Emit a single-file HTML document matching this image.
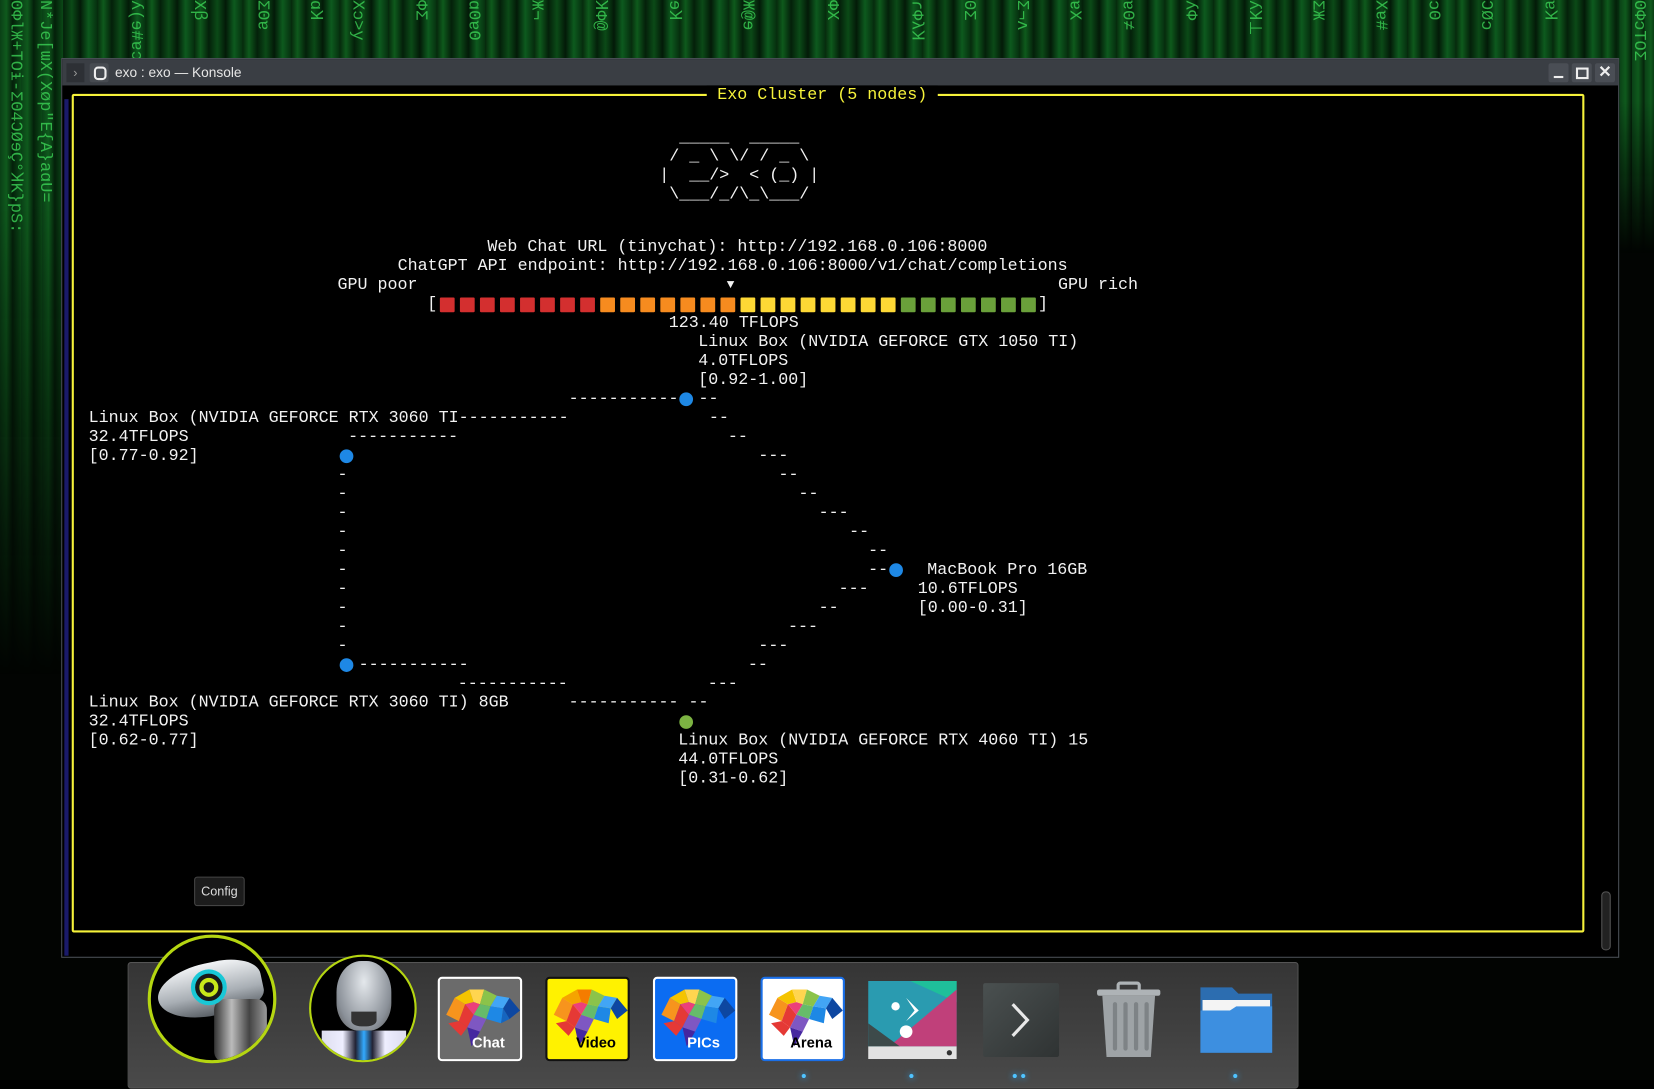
<!DOCTYPE html>
<html><head><meta charset="utf-8"><style>
html,body{margin:0;padding:0;background:#000;width:1654px;height:1080px;overflow:hidden}
#s{position:absolute;left:0;top:0;width:1568px;height:1024px;transform:scale(1.05485);transform-origin:0 0;background:#020402;font-family:"Liberation Sans",sans-serif}
.mx{position:absolute;font-family:"Liberation Mono",monospace;color:#3fdc5a;writing-mode:vertical-rl;font-size:16px;line-height:18px;white-space:nowrap;opacity:.75}
.t{position:absolute;font-family:"Liberation Mono","DejaVu Sans Mono",monospace;font-size:15.8px;line-height:18px;color:#f2f2f2;white-space:pre}
.d{position:absolute;width:13px;height:13px;border-radius:50%;background:#1e88e5}
.sq{position:absolute;top:282px;width:14px;height:14px;border-radius:1px}
.ic{position:absolute;top:926px;width:80px;height:80px;border-radius:4px;box-sizing:border-box;overflow:hidden}
.ic svg{position:absolute;left:2px;top:4px}
.lab{position:absolute;bottom:8px;width:100%;text-align:center;font-weight:bold;font-size:14px;left:8px}
</style></head><body><div id="s">
<!-- matrix bg -->
<div style="position:absolute;left:0;top:0;width:1568px;height:60px;background:repeating-linear-gradient(90deg,#06280c 0,#0e5a1c 6px,#04200a 14px,#0b4a17 22px,#031a08 30px,#0d5a1e 38px,#06300f 46px)"></div>
<div style="position:absolute;left:0;top:0;width:60px;height:640px;background:repeating-linear-gradient(90deg,#0a4016 0,#0f5a1d 6px,#04200a 12px,#0b4a17 20px);-webkit-mask:linear-gradient(180deg,#000 30%,transparent);mask:linear-gradient(180deg,#000 30%,transparent)"></div>
<div style="position:absolute;left:1535px;top:0;width:33px;height:240px;background:repeating-linear-gradient(90deg,#0a4016 0,#0f5a1d 6px,#04200a 12px);-webkit-mask:linear-gradient(180deg,#000 40%,transparent);mask:linear-gradient(180deg,#000 40%,transparent)"></div>
<div class="mx" style="left:6px;top:0;height:560px">ʘΦlЖ+TOɨ-ΣΘ4ƆØɘÇ°ꞰK}pS:</div>
<div class="mx" style="left:34px;top:0;height:600px">N*Je[ɯX(Xøp"E{A}aɑU=</div>
<div class="mx" style="left:120px;top:0">ʎ(ɘ#ɐɔ</div>
<div class="mx" style="left:180px;top:0">Xꞵ</div>
<div class="mx" style="left:240px;top:0">ΣΘɐ</div>
<div class="mx" style="left:290px;top:0">ɑꞰ</div>
<div class="mx" style="left:330px;top:0">Xɔ>y</div>
<div class="mx" style="left:390px;top:0">ΦΣ</div>
<div class="mx" style="left:440px;top:0">ɑ0ɐΘ</div>
<div class="mx" style="left:500px;top:0">Ж¬</div>
<div class="mx" style="left:560px;top:0">ꞰΦ@</div>
<div class="mx" style="left:630px;top:0">ɘꞰ</div>
<div class="mx" style="left:700px;top:0">Ж@ɘ</div>
<div class="mx" style="left:780px;top:0">ΦX</div>
<div class="mx" style="left:860px;top:0">ɾΦλꞰ</div>
<div class="mx" style="left:910px;top:0">ΘΣ</div>
<div class="mx" style="left:960px;top:0">Σ¬ʌ</div>
<div class="mx" style="left:1010px;top:0">ɐX</div>
<div class="mx" style="left:1060px;top:0">ɐΘ≠</div>
<div class="mx" style="left:1120px;top:0">ʎΦ</div>
<div class="mx" style="left:1180px;top:0">ʎꞰ⊥</div>
<div class="mx" style="left:1240px;top:0">ΣЖ</div>
<div class="mx" style="left:1300px;top:0">Xɐ#</div>
<div class="mx" style="left:1350px;top:0">ɔΘ</div>
<div class="mx" style="left:1400px;top:0">ƆØɔ</div>
<div class="mx" style="left:1460px;top:0">ɐꞰ</div>
<div class="mx" style="left:1545px;top:0;height:200px">ʘΦɔTOΣ</div>
<!-- window -->
<div style="position:absolute;left:58px;top:55px;width:1477px;height:853px;background:#000;border:1px solid #4a4f56;box-sizing:border-box"></div>
<div style="position:absolute;left:59px;top:56px;width:1475px;height:25px;background:#3a3e44"></div>
<div style="position:absolute;left:63px;top:60px;width:17px;height:18px;background:#2d3035;color:#999;font-size:12px;text-align:center;line-height:18px">›</div>
<div style="position:absolute;left:85px;top:60px;width:18px;height:18px;background:#474b51;border-radius:2px"></div>
<div style="position:absolute;left:89px;top:63px;width:8px;height:9px;border:2px solid #eee;border-radius:4px"></div>
<div style="position:absolute;left:109px;top:61px;color:#e6e6e6;font-size:13px">exo : exo — Konsole</div>
<div style="position:absolute;left:1468px;top:60px;width:19px;height:18px;background:#4a4e55;border-radius:2px"><div style="position:absolute;left:5px;top:12px;width:9px;height:2px;background:#eee"></div></div>
<div style="position:absolute;left:1490px;top:60px;width:19px;height:18px;background:#4a4e55;border-radius:2px"><div style="position:absolute;left:4px;top:4px;width:8px;height:7px;border:2px solid #eee"></div></div>
<div style="position:absolute;left:1512px;top:60px;width:19px;height:18px;background:#4a4e55;border-radius:2px;color:#eee;font-size:15px;font-weight:bold;text-align:center;line-height:18px">✕</div>
<div style="position:absolute;left:61px;top:94px;width:4px;height:812px;background:#1a1a6a"></div>
<div style="position:absolute;left:1518px;top:845px;width:7px;height:54px;border:1px solid #555;border-radius:4px;background:#222"></div>
<!-- frame -->
<div style="position:absolute;left:68px;top:89px;width:1434px;height:795px;border:2px solid #f6f23a;box-sizing:border-box;border-radius:2px"></div>
<div class="t" style="left:670px;top:81px;background:#000;color:#f6f23a;padding:0 10px">Exo Cluster (5 nodes)</div>
<div class="t" style="left:625px;top:121px">  _____  _____
 / _ \ \/ / _ \
|  __/>  < (_) |
 \___/_/\_\___/</div>
<div class="t" style="left:462px;top:225px">Web Chat URL (tinychat): http://192.168.0.106:8000</div>
<div class="t" style="left:377px;top:243px">ChatGPT API endpoint: http://192.168.0.106:8000/v1/chat/completions</div>
<div class="t" style="left:320px;top:261px">GPU poor</div>
<div class="t" style="left:689px;top:261px;font-size:12px">▼</div>
<div class="t" style="left:1003px;top:261px">GPU rich</div>
<div class="t" style="left:405px;top:279px">[</div>
<div class="t" style="left:984px;top:279px">]</div>
<div class="t" style="left:634px;top:297px">123.40 TFLOPS</div>
<div class="t" style="left:662px;top:315px">Linux Box (NVIDIA GEFORCE GTX 1050 TI)
4.0TFLOPS
[0.92-1.00]</div>
<div class="t" style="left:539px;top:369px">-----------  --</div>
<div class="d" style="left:644px;top:372px"></div>
<div class="t" style="left:84px;top:387px">Linux Box (NVIDIA GEFORCE RTX 3060 TI-----------
32.4TFLOPS
[0.77-0.92]</div>
<div class="t" style="left:672px;top:387px">--</div>
<div class="t" style="left:330px;top:405px">-----------</div>
<div class="t" style="left:690px;top:405px">--</div>
<div class="d" style="left:322px;top:426px"></div>
<div class="t" style="left:719px;top:423px">---</div>
<div class="t" style="left:320px;top:441px">-
-
-
-
-
-
-
-
-
-</div>
<div class="t" style="left:738px;top:441px">--</div>
<div class="t" style="left:757px;top:459px">--</div>
<div class="t" style="left:776px;top:477px">---</div>
<div class="t" style="left:805px;top:495px">--</div>
<div class="t" style="left:823px;top:513px">--</div>
<div class="t" style="left:823px;top:531px">--</div>
<div class="d" style="left:843px;top:534px"></div>
<div class="t" style="left:879px;top:531px">MacBook Pro 16GB</div>
<div class="t" style="left:795px;top:549px">---</div>
<div class="t" style="left:870px;top:549px">10.6TFLOPS
[0.00-0.31]</div>
<div class="t" style="left:776px;top:567px">--</div>
<div class="t" style="left:747px;top:585px">---</div>
<div class="t" style="left:719px;top:603px">---</div>
<div class="d" style="left:322px;top:624px"></div>
<div class="t" style="left:340px;top:621px">-----------</div>
<div class="t" style="left:709px;top:621px">--</div>
<div class="t" style="left:434px;top:639px">-----------</div>
<div class="t" style="left:671px;top:639px">---</div>
<div class="t" style="left:84px;top:657px">Linux Box (NVIDIA GEFORCE RTX 3060 TI) 8GB
32.4TFLOPS
[0.62-0.77]</div>
<div class="t" style="left:539px;top:657px">----------- --</div>
<div class="d" style="left:644px;top:678px;background:#7cb342"></div>
<div class="t" style="left:643px;top:693px">Linux Box (NVIDIA GEFORCE RTX 4060 TI) 15
44.0TFLOPS
[0.31-0.62]</div>
<div style="position:absolute;left:184px;top:831px;width:48px;height:28px;background:#1c1c1c;border:1px solid #444;border-radius:3px;box-sizing:border-box;color:#ddd;font-size:12px;text-align:center;line-height:26px">Config</div>
<!-- bar squares -->
<div class="sq" style="left:417px;background:#d32f2f"></div><div class="sq" style="left:436px;background:#d32f2f"></div><div class="sq" style="left:455px;background:#d32f2f"></div><div class="sq" style="left:474px;background:#d32f2f"></div><div class="sq" style="left:493px;background:#d32f2f"></div><div class="sq" style="left:512px;background:#d32f2f"></div><div class="sq" style="left:531px;background:#d32f2f"></div><div class="sq" style="left:550px;background:#d32f2f"></div>
<div class="sq" style="left:569px;background:#f68b1f"></div><div class="sq" style="left:588px;background:#f68b1f"></div><div class="sq" style="left:607px;background:#f68b1f"></div><div class="sq" style="left:626px;background:#f68b1f"></div><div class="sq" style="left:645px;background:#f68b1f"></div><div class="sq" style="left:664px;background:#f68b1f"></div><div class="sq" style="left:683px;background:#f68b1f"></div>
<div class="sq" style="left:702px;background:#fdd835"></div><div class="sq" style="left:721px;background:#fdd835"></div><div class="sq" style="left:740px;background:#fdd835"></div><div class="sq" style="left:759px;background:#fdd835"></div><div class="sq" style="left:778px;background:#fdd835"></div><div class="sq" style="left:797px;background:#fdd835"></div><div class="sq" style="left:816px;background:#fdd835"></div><div class="sq" style="left:835px;background:#fdd835"></div>
<div class="sq" style="left:854px;background:#6aa03a"></div><div class="sq" style="left:873px;background:#6aa03a"></div><div class="sq" style="left:892px;background:#6aa03a"></div><div class="sq" style="left:911px;background:#6aa03a"></div><div class="sq" style="left:930px;background:#6aa03a"></div><div class="sq" style="left:949px;background:#6aa03a"></div><div class="sq" style="left:968px;background:#6aa03a"></div>
<!-- dock -->
<div style="position:absolute;left:121px;top:912px;width:1110px;height:120px;background:linear-gradient(180deg,#353535,#4a4a4a);border:1px solid #555;border-radius:3px;box-sizing:border-box"></div>
<div style="position:absolute;left:140px;top:886px;width:122px;height:122px;border-radius:50%;border:3px solid #b5d611;box-sizing:border-box;background:#000;overflow:hidden">
<div style="position:absolute;left:6px;top:24px;width:100px;height:50px;border-radius:50% 40% 30% 50%;background:linear-gradient(180deg,#f2f4f6,#a8aeb4 60%,#5a6066);transform:rotate(-12deg)"></div>
<div style="position:absolute;left:60px;top:58px;width:50px;height:60px;background:linear-gradient(90deg,#333,#bbb,#444,#999);border-radius:10px"></div>
<div style="position:absolute;left:38px;top:30px;width:34px;height:34px;border-radius:50%;border:4px solid #19c8d6;box-sizing:border-box;background:#1a1a1a"></div>
<div style="position:absolute;left:46px;top:38px;width:18px;height:18px;border-radius:50%;border:4px solid #c8e81a;box-sizing:border-box"></div></div>
<div style="position:absolute;left:293px;top:905px;width:102px;height:102px;border-radius:50%;border:2px solid #b5d611;box-sizing:border-box;background:#000;overflow:hidden">
<div style="position:absolute;left:24px;top:4px;width:52px;height:66px;border-radius:45% 45% 40% 40%;background:radial-gradient(ellipse at 50% 30%,#e4e8ec,#8a9098 70%,#555)"></div>
<div style="position:absolute;left:38px;top:52px;width:24px;height:14px;border-radius:0 0 40% 40%;background:#333"></div>
<div style="position:absolute;left:10px;top:70px;width:80px;height:40px;background:linear-gradient(90deg,#dde 0,#eef 25%,#223 40%,#3af 50%,#223 60%,#eef 75%,#dde)"></div></div>

<div class="ic" style="left:415px;background:#6b6b6b;border:2px solid #fff"><svg width="74" height="60" viewBox="0 0 74 60"><polygon points="4,30 12,14 22,20 16,36" fill="#f7941d"/><polygon points="12,14 26,6 30,18 22,20" fill="#f5c400"/><polygon points="26,6 40,6 36,20 30,18" fill="#ffd54f"/><polygon points="40,6 52,12 46,22 36,20" fill="#8bc34a"/><polygon points="52,12 64,14 58,24 46,22" fill="#42a5f5"/><polygon points="64,14 74,26 64,34 58,24" fill="#0d47a1"/><polygon points="16,36 22,20 30,30 24,42" fill="#e53935"/><polygon points="22,20 30,18 36,20 30,30" fill="#ec407a"/><polygon points="36,20 46,22 42,34 30,30" fill="#66bb6a"/><polygon points="46,22 58,24 56,38 42,34" fill="#1e88e5"/><polygon points="58,24 64,34 56,38" fill="#1565c0"/><polygon points="24,42 30,30 42,34 36,46" fill="#7e57c2"/><polygon points="6,38 16,36 24,42 18,50" fill="#e53935"/><polygon points="24,42 36,46 28,60" fill="#4527a0"/></svg><div class="lab" style="color:#fff">Chat</div></div>
<div class="ic" style="left:517px;background:#fff200;border:2px solid #111"><svg width="74" height="60" viewBox="0 0 74 60"><polygon points="4,30 12,14 22,20 16,36" fill="#f7941d"/><polygon points="12,14 26,6 30,18 22,20" fill="#f5a400"/><polygon points="26,6 40,6 36,20 30,18" fill="#f57c00"/><polygon points="40,6 52,12 46,22 36,20" fill="#8bc34a"/><polygon points="52,12 64,14 58,24 46,22" fill="#42a5f5"/><polygon points="64,14 74,26 64,34 58,24" fill="#0d47a1"/><polygon points="16,36 22,20 30,30 24,42" fill="#e53935"/><polygon points="22,20 30,18 36,20 30,30" fill="#ec407a"/><polygon points="36,20 46,22 42,34 30,30" fill="#66bb6a"/><polygon points="46,22 58,24 56,38 42,34" fill="#1e88e5"/><polygon points="24,42 30,30 42,34 36,46" fill="#7e57c2"/><polygon points="6,38 16,36 24,42 18,50" fill="#e53935"/><polygon points="24,42 36,46 28,60" fill="#4527a0"/></svg><div class="lab" style="color:#000">Video</div></div>
<div class="ic" style="left:619px;background:#0b6cf2;border:2px solid #fff"><svg width="74" height="60" viewBox="0 0 74 60"><polygon points="4,30 12,14 22,20 16,36" fill="#f7941d"/><polygon points="12,14 26,6 30,18 22,20" fill="#f5c400"/><polygon points="26,6 40,6 36,20 30,18" fill="#ffd54f"/><polygon points="40,6 52,12 46,22 36,20" fill="#8bc34a"/><polygon points="52,12 64,14 58,24 46,22" fill="#42a5f5"/><polygon points="64,14 74,26 64,34 58,24" fill="#0d47a1"/><polygon points="16,36 22,20 30,30 24,42" fill="#e53935"/><polygon points="22,20 30,18 36,20 30,30" fill="#ec407a"/><polygon points="36,20 46,22 42,34 30,30" fill="#66bb6a"/><polygon points="46,22 58,24 56,38 42,34" fill="#1e88e5"/><polygon points="24,42 30,30 42,34 36,46" fill="#7e57c2"/><polygon points="6,38 16,36 24,42 18,50" fill="#e53935"/><polygon points="24,42 36,46 28,60" fill="#4527a0"/></svg><div class="lab" style="color:#fff">PICs</div></div>
<div class="ic" style="left:721px;background:#fff;border:2px solid #1a6fe8"><svg width="74" height="60" viewBox="0 0 74 60"><polygon points="4,30 12,14 22,20 16,36" fill="#f7941d"/><polygon points="12,14 26,6 30,18 22,20" fill="#f5c400"/><polygon points="26,6 40,6 36,20 30,18" fill="#ffd54f"/><polygon points="40,6 52,12 46,22 36,20" fill="#8bc34a"/><polygon points="52,12 64,14 58,24 46,22" fill="#42a5f5"/><polygon points="64,14 74,26 64,34 58,24" fill="#0d47a1"/><polygon points="16,36 22,20 30,30 24,42" fill="#e53935"/><polygon points="22,20 30,18 36,20 30,30" fill="#ec407a"/><polygon points="36,20 46,22 42,34 30,30" fill="#66bb6a"/><polygon points="46,22 58,24 56,38 42,34" fill="#1e88e5"/><polygon points="24,42 30,30 42,34 36,46" fill="#7e57c2"/><polygon points="6,38 16,36 24,42 18,50" fill="#e53935"/><polygon points="24,42 36,46 28,60" fill="#4527a0"/></svg><div class="lab" style="color:#000">Arena</div></div>
<svg style="position:absolute;left:823px;top:930px" width="84" height="74" viewBox="0 0 84 74"><polygon points="0,0 84,0 84,62 0,62" fill="#2a9bb0"/><polygon points="40,0 84,0 84,20" fill="#1fbf9a"/><polygon points="84,8 84,62 20,62" fill="#c0407a"/><polygon points="0,40 30,62 0,62" fill="#3d4a4a"/><rect x="0" y="62" width="84" height="12" fill="#e2e2e2"/><circle cx="26" cy="24" r="4" fill="#fff"/><circle cx="36" cy="48" r="6" fill="#fff"/><polygon points="36,16 48,28 36,38 44,28" fill="#fff"/><circle cx="77" cy="68" r="2.5" fill="#333"/></svg>
<div style="position:absolute;left:932px;top:932px;width:72px;height:70px;background:linear-gradient(135deg,#4a5050,#2f3333);border-radius:2px"><svg width="72" height="70"><polyline points="28,20 42,35 28,50" fill="none" stroke="#e8e8e8" stroke-width="3"/></svg></div>
<svg style="position:absolute;left:1036px;top:930px" width="68" height="74" viewBox="0 0 68 74"><rect x="4" y="8" width="60" height="6" rx="2" fill="#aeb3b6"/><rect x="24" y="2" width="20" height="8" rx="2" fill="none" stroke="#aeb3b6" stroke-width="3"/><polygon points="9,14 59,14 55,72 13,72" fill="#9ea3a6"/><rect x="19" y="20" width="4" height="46" rx="2" fill="#7e8386"/><rect x="29" y="20" width="4" height="46" rx="2" fill="#7e8386"/><rect x="39" y="20" width="4" height="46" rx="2" fill="#7e8386"/><rect x="49" y="20" width="4" height="46" rx="2" fill="#7e8386"/></svg>
<svg style="position:absolute;left:1136px;top:934px" width="72" height="66" viewBox="0 0 72 66"><path d="M2 2 H32 L38 8 H70 V64 H2 Z" fill="#2c6db0"/><rect x="4" y="14" width="64" height="16" fill="#f4f4f4"/><path d="M2 24 H30 L36 20 H70 V64 H2 Z" fill="#3d8fe0"/></svg>
<div style="position:absolute;left:760px;top:1018px;width:4px;height:4px;border-radius:50%;background:#4fc3ff;box-shadow:0 0 6px #29a9ff"></div>
<div style="position:absolute;left:862px;top:1018px;width:4px;height:4px;border-radius:50%;background:#4fc3ff;box-shadow:0 0 6px #29a9ff"></div>
<div style="position:absolute;left:960px;top:1018px;width:4px;height:4px;border-radius:50%;background:#4fc3ff;box-shadow:0 0 6px #29a9ff"></div>
<div style="position:absolute;left:968px;top:1018px;width:4px;height:4px;border-radius:50%;background:#4fc3ff;box-shadow:0 0 6px #29a9ff"></div>
<div style="position:absolute;left:1169px;top:1018px;width:4px;height:4px;border-radius:50%;background:#4fc3ff;box-shadow:0 0 6px #29a9ff"></div>
</div></body></html>
